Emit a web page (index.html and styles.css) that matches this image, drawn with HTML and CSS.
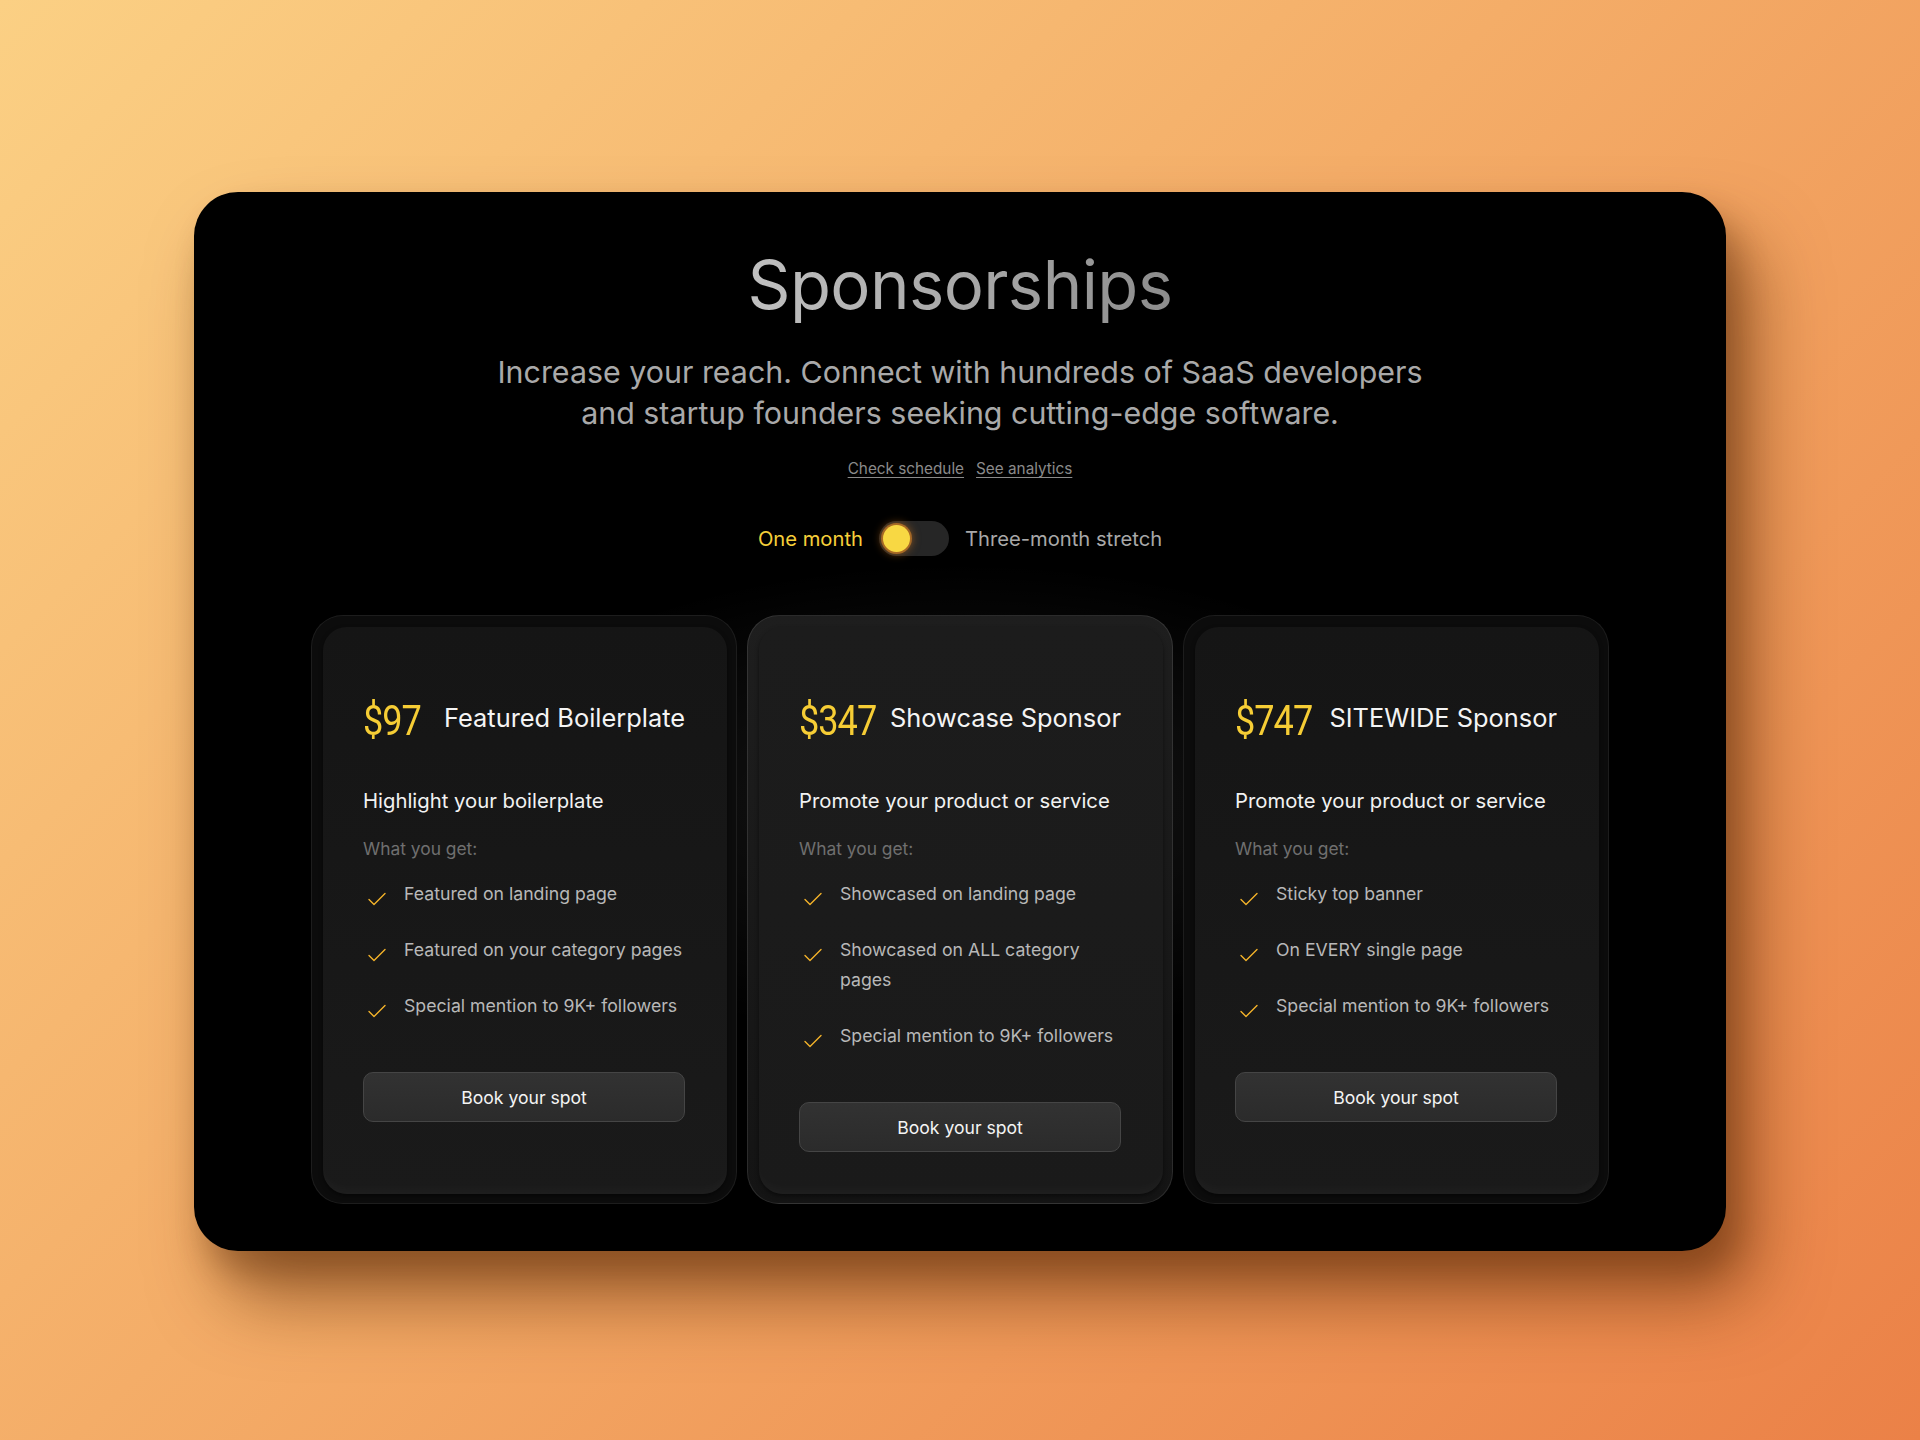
FILE: index.html
```html
<!DOCTYPE html>
<html lang="en">
<head>
<meta charset="utf-8">
<title>Sponsorships</title>
<link rel="stylesheet" href="styles.css">
</head>
<body>
<main class="panel">
  <h1 class="title">Sponsorships</h1>
  <p class="subtitle">Increase your reach. Connect with hundreds of SaaS developers<br>and startup founders seeking cutting-edge software.</p>
  <div class="links"><a href="#">Check schedule</a><a href="#">See analytics</a></div>
  <div class="toggle-row">
    <span class="opt active">One month</span>
    <span class="switch"><span class="knob"></span></span>
    <span class="opt">Three-month stretch</span>
  </div>
  <section class="cards">
    <div class="card">
      <div class="card-inner">
        <div class="head"><span class="price">$97</span><span class="name">Featured Boilerplate</span></div>
        <p class="desc">Highlight your boilerplate</p>
        <p class="get">What you get:</p>
        <ul class="features">
          <li><svg class="check" viewBox="0 0 18 14"><polyline points="1,7.5 6,12.5 17,1.5"/></svg><span>Featured on landing page</span></li>
          <li><svg class="check" viewBox="0 0 18 14"><polyline points="1,7.5 6,12.5 17,1.5"/></svg><span>Featured on your category pages</span></li>
          <li><svg class="check" viewBox="0 0 18 14"><polyline points="1,7.5 6,12.5 17,1.5"/></svg><span>Special mention to 9K+ followers</span></li>
        </ul>
        <button class="btn">Book your spot</button>
      </div>
    </div>
    <div class="card mid">
      <div class="card-inner">
        <div class="head"><span class="price">$347</span><span class="name">Showcase Sponsor</span></div>
        <p class="desc">Promote your product or service</p>
        <p class="get">What you get:</p>
        <ul class="features">
          <li><svg class="check" viewBox="0 0 18 14"><polyline points="1,7.5 6,12.5 17,1.5"/></svg><span>Showcased on landing page</span></li>
          <li><svg class="check" viewBox="0 0 18 14"><polyline points="1,7.5 6,12.5 17,1.5"/></svg><span>Showcased on ALL category pages</span></li>
          <li><svg class="check" viewBox="0 0 18 14"><polyline points="1,7.5 6,12.5 17,1.5"/></svg><span>Special mention to 9K+ followers</span></li>
        </ul>
        <button class="btn">Book your spot</button>
      </div>
    </div>
    <div class="card">
      <div class="card-inner">
        <div class="head"><span class="price">$747</span><span class="name">SITEWIDE Sponsor</span></div>
        <p class="desc">Promote your product or service</p>
        <p class="get">What you get:</p>
        <ul class="features">
          <li><svg class="check" viewBox="0 0 18 14"><polyline points="1,7.5 6,12.5 17,1.5"/></svg><span>Sticky top banner</span></li>
          <li><svg class="check" viewBox="0 0 18 14"><polyline points="1,7.5 6,12.5 17,1.5"/></svg><span>On EVERY single page</span></li>
          <li><svg class="check" viewBox="0 0 18 14"><polyline points="1,7.5 6,12.5 17,1.5"/></svg><span>Special mention to 9K+ followers</span></li>
        </ul>
        <button class="btn">Book your spot</button>
      </div>
    </div>
  </section>
</main>
</body>
</html>
```

FILE: styles.css
```css
* { box-sizing: border-box; }
html, body { margin: 0; padding: 0; }
body {
  width: 1920px;
  height: 1440px;
  overflow: hidden;
  background: linear-gradient(135deg, #fbd084 0%, #f4ad68 45%, #eb8147 100%);
  font-family: Inter, "Noto Sans", sans-serif;
  padding-top: 192px;
}
.panel {
  width: 1532px;
  height: 1059px;
  margin: 0 auto;
  border-radius: 44px;
  background:
    radial-gradient(ellipse 520px 240px at 50% 610px, rgba(255,255,255,0.085), rgba(255,255,255,0) 100%),
    #000;
  box-shadow: 28px 48px 70px rgba(90, 40, 5, 0.55), 12px 22px 30px rgba(90,40,5,0.3);
  padding-top: 51px;
  display: flex;
  flex-direction: column;
  align-items: center;
}
.title {
  margin: 0;
  font-size: 67px;
  line-height: 84px;
  font-weight: 400;
  letter-spacing: -0.6px;
  background: linear-gradient(90deg, #c0c0c0 0%, #a4a4a4 60%, #8c8c8c 100%);
  -webkit-background-clip: text;
  background-clip: text;
  color: transparent;
}
.subtitle {
  margin: 25px 0 0;
  font-size: 30.4px;
  line-height: 41px;
  color: #a9a9a9;
  text-align: center;
}
.links {
  margin-top: 25px;
  display: flex;
  gap: 12px;
  line-height: 20px;
}
.links a {
  color: #8a8a8a;
  font-size: 15.3px;
  text-decoration: underline;
  text-underline-offset: 3px;
}
.toggle-row {
  margin-top: 41px;
  display: flex;
  align-items: center;
  height: 36px;
}
.opt {
  font-size: 20.2px;
  color: #a8a8a8;
}
.opt.active { color: #f6cf3a; }
.switch {
  width: 70px;
  height: 35px;
  border-radius: 18px;
  background: #262626;
  margin: 0 16px 0 16px;
  display: flex;
  align-items: center;
  padding-left: 4px;
}
.knob {
  width: 27px;
  height: 27px;
  border-radius: 50%;
  background: #f8d843;
  box-shadow: 0 0 0 2px rgba(230,140,40,0.55), 0 0 8px 2px rgba(230,130,30,0.5);
}
.cards {
  margin-top: 59px;
  display: grid;
  grid-template-columns: repeat(3, 426px);
  gap: 10px;
}
.card {
  border-radius: 32px;
  border: 1px solid rgba(255,255,255,0.07);
  background: #0c0c0c;
  padding: 11px 9px 9px 11px;
  height: 589px;
}
.card.mid {
  background: linear-gradient(180deg, #1e1e1e 0%, #141414 100%);
  border-color: rgba(255,255,255,0.1);
}
.card-inner {
  height: 100%;
  border-radius: 24px;
  background: linear-gradient(180deg, #151515 0%, #1a1a1a 100%);
  box-shadow: inset 0 -10px 8px -4px rgba(255,255,255,0.025), 0 2px 4px rgba(0,0,0,0.5);
  padding: 67px 42px 0 40px;
  display: flex;
  flex-direction: column;
}
.mid .card-inner {
  background: linear-gradient(180deg, #1c1c1c 0%, #1a1a1a 100%);
}
.head {
  display: flex;
  justify-content: space-between;
  align-items: center;
  height: 48px;
}
.price {
  display: inline-block;
  flex: none;
  font-family: Roboto, sans-serif;
  font-size: 43px;
  font-weight: 400;
  letter-spacing: -1.2px;
  color: #f6cd35;
  line-height: 48px;
  padding-top: 4px;
  margin-right: -12px;
  transform: scaleX(0.84);
  transform-origin: left center;
}
.name {
  flex: none;
  white-space: nowrap;
  font-size: 25.4px;
  color: #f4f4f4;
  line-height: 32px;
}
.desc {
  margin: 45px 0 0;
  font-size: 20.3px;
  line-height: 28px;
  color: #f2f2f2;
}
.get {
  margin: 21px 0 0;
  font-size: 17.4px;
  line-height: 26px;
  color: #6f6f6f;
}
.features {
  list-style: none;
  margin: 17px 0 0;
  padding: 0;
  display: flex;
  flex-direction: column;
  gap: 26px;
}
.features li {
  display: flex;
  align-items: flex-start;
  font-size: 17.7px;
  line-height: 30px;
  color: #b8b8b8;
}
.check {
  flex: none;
  width: 18px;
  height: 14px;
  margin: 13px 18px 0 5px;
  fill: none;
  stroke: #f3b22a;
  stroke-width: 1.4;
  stroke-linecap: round;
  stroke-linejoin: round;
}
.btn {
  margin-top: 51px;
  height: 50px;
  width: 100%;
  border-radius: 10px;
  border: 1px solid #454545;
  background: linear-gradient(180deg, #323232 0%, #2b2b2b 100%);
  color: #f4f4f4;
  font-family: Inter, sans-serif;
  font-size: 17.6px;
  cursor: pointer;
}
```
